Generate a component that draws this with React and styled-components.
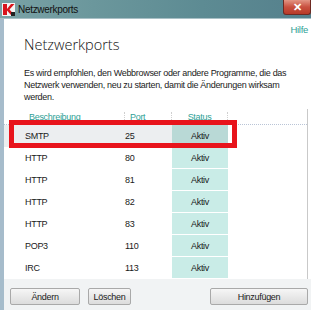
import React from "react"
import styled, { createGlobalStyle } from "styled-components"

const GlobalStyle = createGlobalStyle`
  html, body {
    margin: 0;
    padding: 0;
    background: #ffffff;
  }
  body {
    font-family: "Liberation Sans", Arial, sans-serif;
    letter-spacing: -0.3px;
  }
`

const Window = styled.div`
  position: relative;
  width: 311px;
  height: 310px;
  display: flex;
  flex-direction: column;
  overflow: hidden;
  background: #ffffff;
`

const TitleBar = styled.div`
  height: 18px;
  flex: 0 0 18px;
  display: flex;
  align-items: center;
  background: linear-gradient(90deg, #7aa2a6 0%, #6b979c 30%, #5d8b93 65%, #55808c 100%);
  border-bottom: 1px solid #a9c0c6;
  padding-left: 2px;
`

const Logo = styled.svg`
  width: 13px;
  height: 13px;
  margin-right: 3px;
`

const WindowTitle = styled.span`
  font-size: 10px;
  color: #111;
`

const CloseButton = styled.div`
  margin-left: auto;
  align-self: flex-start;
  width: 28px;
  height: 15px;
  border-radius: 0 0 3px 3px;
  border: 1px solid #6e2a22;
  border-top: none;
  box-sizing: border-box;
  background: linear-gradient(180deg, #e39584 0%, #c9503f 50%, #b83a28 100%);
  color: #fff;
  font-size: 11px;
  font-weight: 700;
  display: flex;
  align-items: center;
  justify-content: center;
`

const Frame = styled.div`
  flex: 1;
  display: flex;
  border-left: 4px solid #a6bccb;
`

const Content = styled.div`
  flex: 1;
  display: flex;
  flex-direction: column;
  min-width: 0;
`

const Main = styled.div`
  display: flex;
  flex-direction: column;
  background: #ffffff;
`

const HelpRow = styled.div`
  display: flex;
  justify-content: flex-end;
  height: 11px;
  padding-top: 5px;
  line-height: 11px;
`

const HelpLink = styled.span`
  font-size: 9.5px;
  color: #2f9f96;
  margin-right: 3px;
`

const Heading = styled.h1`
  margin: 0 0 0 20px;
  font-family: "Open Sans", "Liberation Sans", sans-serif;
  font-weight: 300;
  font-size: 14.5px;
  line-height: 20px;
  letter-spacing: normal;
  color: #111;
`

const Intro = styled.p`
  margin: 12px 14px 0 20px;
  font-size: 9px;
  line-height: 12px;
  color: #222;
`

const List = styled.div`
  position: relative;
  margin-top: 6px;
  margin-right: 3px;
  border-right: 1px solid #c9c9c9;
  display: flex;
  flex-direction: column;
`

const HeaderRow = styled.div`
  display: grid;
  grid-template-columns: 121px 47px 56px 1fr;
  height: 15px;
  align-items: center;
  border-bottom: 1px dotted #b9c4d6;
`

const HeaderCell = styled.div`
  font-size: 9px;
  color: #2f9f96;
  padding-left: ${p => p.$pad || 0}px;
  text-align: ${p => p.$center ? "center" : "left"};
  border-right: ${p => p.$sep ? "1px dotted #cfcfcf" : "none"};
  height: 10px;
  line-height: 10px;
`

const Row = styled.div`
  display: grid;
  grid-template-columns: 121px 47px 56px 1fr;
  height: 22px;
  align-items: stretch;
`

const Cell = styled.div`
  display: flex;
  align-items: center;
  font-size: 9px;
  color: #1a1a1a;
  padding-left: ${p => p.$pad || 0}px;
  background: ${p => p.$selected ? "#eceef0" : "transparent"};
`

const StatusCell = styled.div`
  display: flex;
  align-items: center;
  justify-content: center;
  font-size: 9px;
  color: #1a1a1a;
  background: ${p => p.$selected ? "#b9d9d6" : "#c9ece7"};
  border-bottom: 1px solid #ffffff;
`

const Highlight = styled.div`
  position: absolute;
  left: 5px;
  top: 11px;
  width: 228px;
  height: 28px;
  box-sizing: border-box;
  border: 5px solid #e8141c;
  pointer-events: none;
`

const Footer = styled.div`
  flex: 1;
  display: flex;
  align-items: flex-start;
  padding: 9px 3px 0 6px;
  gap: 8px;
  background: #f1f3f4;
`

const Button = styled.button`
  height: 17px;
  width: ${p => p.$width}px;
  margin-left: ${p => p.$push ? "auto" : "0"};
  padding: 0;
  border: 1px solid #a9a9a9;
  border-radius: 2px;
  background: linear-gradient(180deg, #f6f6f6 0%, #e9e9e9 50%, #dcdcdc 100%);
  font-family: "Liberation Sans", Arial, sans-serif;
  letter-spacing: -0.3px;
  font-size: 9px;
  color: #1a1a1a;
`

const ports = [
  { name: "SMTP", port: 25 },
  { name: "HTTP", port: 80 },
  { name: "HTTP", port: 81 },
  { name: "HTTP", port: 82 },
  { name: "HTTP", port: 83 },
  { name: "POP3", port: 110 },
  { name: "IRC", port: 113 },
]

const App = () => {
  return (
    <>
      <GlobalStyle />
      <Window>
        <TitleBar>
          <Logo viewBox="0 0 13 13">
            <rect x="0" y="0" width="13" height="13" fill="#f4f4f4" />
            <path d="M1 1 L5 1 L5 6 L9 1 L12.5 1 L7.5 6.5 L12.5 12 L9 12 L5 7.5 L5 12 L1 12 Z" fill="#d8141c" />
            <rect x="9" y="9" width="4" height="4" fill="#222" />
          </Logo>
          <WindowTitle>Netzwerkports</WindowTitle>
          <CloseButton>✕</CloseButton>
        </TitleBar>
        <Frame>
          <Content>
            <Main>
              <HelpRow>
                <HelpLink>Hilfe</HelpLink>
              </HelpRow>
              <Heading>Netzwerkports</Heading>
              <Intro>
                Es wird empfohlen, den Webbrowser oder andere Programme, die das
                Netzwerk verwenden, neu zu starten, damit die Änderungen wirksam
                werden.
              </Intro>
              <List>
                <HeaderRow>
                  <HeaderCell $pad={25} $sep>Beschreibung</HeaderCell>
                  <HeaderCell $pad={5} $sep>Port</HeaderCell>
                  <HeaderCell $center $sep>Status</HeaderCell>
                  <div />
                </HeaderRow>
                {ports.map((p, i) => (
                  <Row key={i}>
                    <Cell $pad={21} $selected={i === 0}>{p.name}</Cell>
                    <Cell $selected={i === 0}>{p.port}</Cell>
                    <StatusCell $selected={i === 0}>Aktiv</StatusCell>
                    <div />
                  </Row>
                ))}
                <Highlight />
              </List>
            </Main>
            <Footer>
              <Button $width={70}>Ändern</Button>
              <Button $width={43}>Löschen</Button>
              <Button $width={98} $push>Hinzufügen</Button>
            </Footer>
          </Content>
        </Frame>
      </Window>
    </>
  )
}

export default App
